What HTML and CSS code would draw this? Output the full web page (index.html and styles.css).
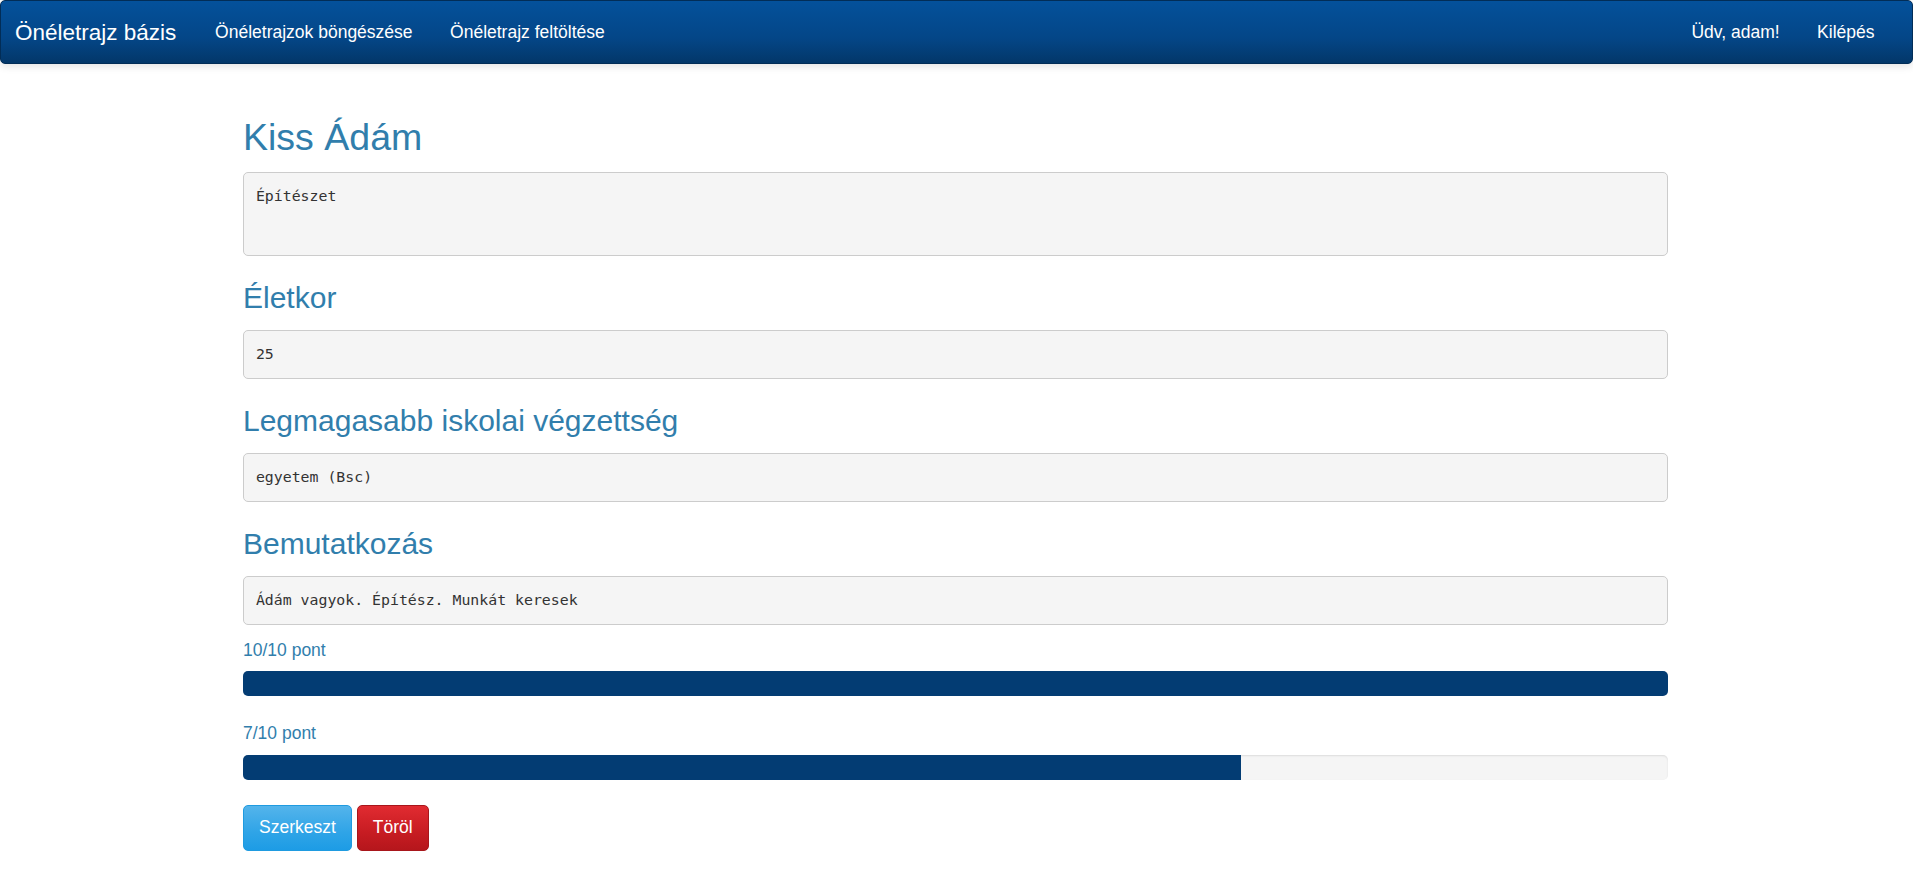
FILE: index.html
```html
<!DOCTYPE html>
<html lang="hu">
<head>
<meta charset="utf-8">
<title>Kiss Ádám – Önéletrajz bázis</title>
<link rel="stylesheet" href="styles.css">
</head>
<body>
<nav class="navbar">
  <div class="nav-left">
    <a class="brand" href="#">Önéletrajz bázis</a>
    <a class="nav-link" href="#">Önéletrajzok böngészése</a>
    <a class="nav-link" href="#">Önéletrajz feltöltése</a>
  </div>
  <div class="nav-right">
    <span class="nav-link">Üdv, adam!</span>
    <a class="nav-link" href="#">Kilépés</a>
  </div>
</nav>
<main class="container">
  <h1 class="name">Kiss Ádám</h1>
  <pre class="field field-tall">Építészet</pre>
  <h2 class="section">Életkor</h2>
  <pre class="field">25</pre>
  <h2 class="section">Legmagasabb iskolai végzettség</h2>
  <pre class="field">egyetem (Bsc)</pre>
  <h2 class="section">Bemutatkozás</h2>
  <pre class="field">Ádám vagyok. Építész. Munkát keresek</pre>
  <div class="score">
    <div class="score-label">10/10 pont</div>
    <div class="progress"><div class="progress-bar" style="width: 100%"></div></div>
  </div>
  <div class="score">
    <div class="score-label">7/10 pont</div>
    <div class="progress"><div class="progress-bar" style="width: 70%"></div></div>
  </div>
  <div class="actions">
    <a class="btn btn-primary" href="#">Szerkeszt</a>
    <a class="btn btn-danger" href="#">Töröl</a>
  </div>
</main>
</body>
</html>
```
FILE: styles.css
```css
* { box-sizing: border-box; }

html, body { height: 100%; }

body {
  margin: 0 2px 0 0;
  font-family: "Liberation Sans", Arial, sans-serif;
  font-size: 17.5px;
  line-height: 1.42857;
  color: #555;
  background: #fff;
}

a { text-decoration: none; }

.navbar {
  display: flex;
  justify-content: space-between;
  align-items: stretch;
  height: 64px;
  padding: 0 18.75px 0 0;
  background-image: linear-gradient(#04519b, #044687 60%, #033769);
  border: 1px solid #022d57;
  border-radius: 5px;
  box-shadow: 0 2px 8px rgba(0, 0, 0, 0.12);
}

.nav-left, .nav-right {
  display: flex;
  align-items: center;
}

.brand {
  color: #fff;
  font-size: 22.5px;
  line-height: 25px;
  padding: 18px 20px 18px 14px;
}

.nav-link {
  color: #fff;
  font-size: 17.5px;
  line-height: 25px;
  padding: 18.75px 18.75px;
}

.container {
  width: 1425px;
  margin-left: calc(50% - 713.5px);
  padding-top: 25px;
}

.name {
  margin: 28px 0 14px;
  font-size: 37.5px;
  font-weight: 500;
  line-height: 1.1;
  color: #317eac;
}

.section {
  margin: 25px 0 16px;
  font-size: 30px;
  font-weight: 500;
  line-height: 33px;
  color: #317eac;
}

.field {
  margin: 0 0 12.5px;
  padding: 11.9px;
  font-family: "DejaVu Sans Mono", "Liberation Mono", monospace;
  font-size: 14.85px;
  line-height: 23.2px;
  color: #333;
  background: #f5f5f5;
  border: 1px solid #ccc;
  border-radius: 5px;
  height: 49px;
  white-space: pre-wrap;
}

.field-tall { height: 84px; }

.score-label {
  color: #317eac;
  font-size: 17.5px;
  line-height: 25px;
  margin-bottom: 8.5px;
}

.progress {
  height: 25px;
  margin-bottom: 25px;
  overflow: hidden;
  background: #f5f5f5;
  border-radius: 5px;
  box-shadow: inset 0 1px 2px rgba(0, 0, 0, 0.1);
}

.progress-bar {
  height: 100%;
  background: #033c73;
}

.actions {
  display: flex;
  gap: 5px;
}

.btn {
  display: inline-block;
  padding: 9.5px 15px;
  font-size: 17.5px;
  line-height: 25px;
  color: #fff;
  border-radius: 5px;
  border: 1px solid transparent;
}

.btn-primary {
  background-image: linear-gradient(#54b4eb, #2fa4e7 60%, #1d9ce5);
  border-color: #1f9be0;
}

.btn-danger {
  background-image: linear-gradient(#e12b31, #c71c22 60%, #b5161c);
  border-color: #a8161b;
}
```
